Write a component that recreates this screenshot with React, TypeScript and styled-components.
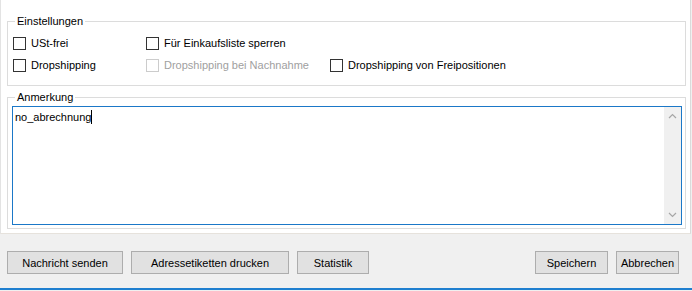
import styled, { createGlobalStyle } from 'styled-components';

const GlobalStyle = createGlobalStyle`
  html, body {
    margin: 0;
    padding: 0;
    background: #f0f0f0;
  }
  body {
    font-family: 'Liberation Sans', Arial, sans-serif;
    font-size: 11px;
    color: #000;
  }
`;

const Window = styled.div`
  width: 692px;
  height: 291px;
  display: flex;
  flex-direction: column;
  background: #f0f0f0;
  overflow: hidden;
`;

const Panel = styled.div`
  height: 219px;
  padding: 14px 4px 0 6px;
  background: #fff;
  border-left: 1px solid #e3e3e3;
  border-right: 1px solid #dadada;
  border-bottom: 1px solid #e6e2dc;
  margin-right: 1px;
  display: flex;
  flex-direction: column;
  gap: 4px;
`;

const Group = styled.fieldset`
  margin: 0;
  padding: 0;
  border: 1px solid #dcdcdc;
  min-width: 0;
`;

const Legend = styled.legend`
  margin-left: 7px;
  padding: 0 2px;
  line-height: 14px;
  font-size: 11px;
  color: #000;
`;

const CheckGrid = styled.div`
  display: grid;
  grid-template-columns: 133px 184px auto;
  grid-auto-rows: 22px;
  padding: 4px 0 9px 5px;
`;

const CheckItem = styled.label<{ $disabled?: boolean }>`
  display: flex;
  align-items: center;
  gap: 5px;
  white-space: nowrap;
  color: ${p => (p.$disabled ? '#a0a0a0' : '#000')};
`;

const Box = styled.span<{ $disabled?: boolean }>`
  width: 11px;
  height: 11px;
  border: 1px solid ${p => (p.$disabled ? '#cccccc' : '#333333')};
  background: #fff;
  flex: none;
`;

const Memo = styled.div`
  height: 117px;
  margin: 2px 3px 3px 4px;
  border: 1px solid #1b78c8;
  display: flex;
  background: #fff;
`;

const MemoText = styled.div`
  flex: 1;
  padding: 3px 2px;
  line-height: 14px;
`;

const Caret = styled.span`
  display: inline-block;
  width: 1px;
  height: 14px;
  background: #000;
  vertical-align: -3px;
`;

const ScrollBar = styled.div`
  width: 17px;
  background: #f0f0f0;
  display: flex;
  flex-direction: column;
  justify-content: space-between;
  align-items: center;
  padding: 6px 0;
`;

const Footer = styled.div`
  flex: 1;
  display: flex;
  align-items: flex-start;
  padding: 17px 13px 0 7px;
  gap: 8px;
`;

const Button = styled.button<{ $w: number }>`
  width: ${p => p.$w}px;
  height: 23px;
  padding: 0;
  background: #e1e1e1;
  border: 1px solid #adadad;
  font-family: inherit;
  font-size: 11px;
  color: #000;
`;

const Spacer = styled.div`
  flex: 1;
`;

const BlueLine = styled.div`
  height: 2px;
  background: #1f7fcf;
  margin-bottom: 1px;
`;

const Chevron = ({ up }: { up?: boolean }) => (
  <svg width="9" height="6" viewBox="0 0 9 6">
    <path
      d={up ? 'M1 5 L4.5 1.5 L8 5' : 'M1 1 L4.5 4.5 L8 1'}
      fill="none"
      stroke="#a6a6a6"
      strokeWidth="1.2"
    />
  </svg>
);

function Check({ label, disabled }: { label: string; disabled?: boolean }) {
  return (
    <CheckItem $disabled={disabled}>
      <Box $disabled={disabled} />
      {label}
    </CheckItem>
  );
}

export default function App() {
  return (
    <>
      <GlobalStyle />
      <Window>
        <Panel>
          <Group>
            <Legend>Einstellungen</Legend>
            <CheckGrid>
              <Check label="USt-frei" />
              <Check label="Für Einkaufsliste sperren" />
              <span />
              <Check label="Dropshipping" />
              <Check label="Dropshipping bei Nachnahme" disabled />
              <Check label="Dropshipping von Freipositionen" />
            </CheckGrid>
          </Group>
          <Group>
            <Legend>Anmerkung</Legend>
            <Memo>
              <MemoText>
                no_abrechnung
                <Caret />
              </MemoText>
              <ScrollBar>
                <Chevron up />
                <Chevron />
              </ScrollBar>
            </Memo>
          </Group>
        </Panel>
        <Footer>
          <Button $w={116}>Nachricht senden</Button>
          <Button $w={158}>Adressetiketten drucken</Button>
          <Button $w={72}>Statistik</Button>
          <Spacer />
          <Button $w={73}>Speichern</Button>
          <Button $w={63}>Abbrechen</Button>
        </Footer>
        <BlueLine />
      </Window>
    </>
  );
}
